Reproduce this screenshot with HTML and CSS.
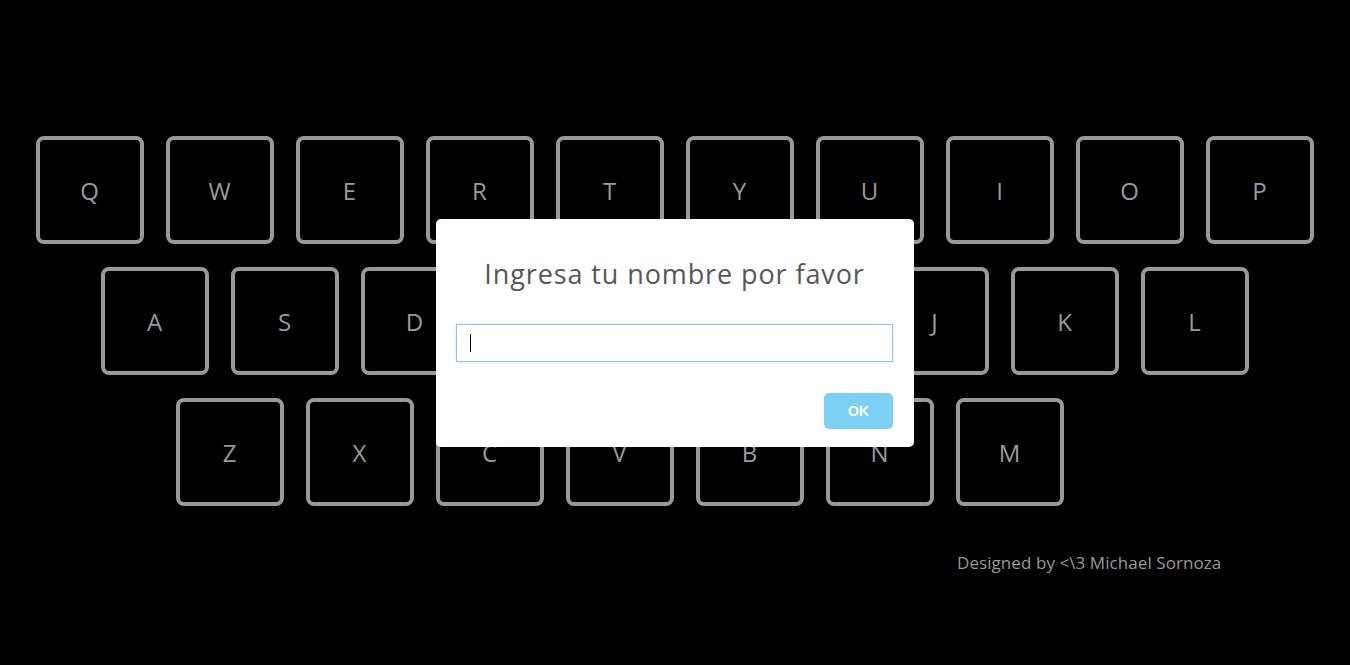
FILE: index.html
```html
<!DOCTYPE html>
<html lang="es">
<head>
<meta charset="utf-8">
<title>Keyboard</title>
<link rel="stylesheet" href="styles.css">
</head>
<body>
<main class="page">
  <div class="keyboard">
    <div class="row">
      <div class="key">Q</div><div class="key">W</div><div class="key">E</div><div class="key">R</div><div class="key">T</div><div class="key">Y</div><div class="key">U</div><div class="key">I</div><div class="key">O</div><div class="key">P</div>
    </div>
    <div class="row">
      <div class="key">A</div><div class="key">S</div><div class="key">D</div><div class="key">F</div><div class="key">G</div><div class="key">H</div><div class="key">J</div><div class="key">K</div><div class="key">L</div>
    </div>
    <div class="row row-last">
      <div class="key">Z</div><div class="key">X</div><div class="key">C</div><div class="key">V</div><div class="key">B</div><div class="key">N</div><div class="key">M</div>
    </div>
  </div>
  <footer class="credits">Designed by &lt;\3 Michael Sornoza</footer>
</main>
<div class="overlay">
  <div class="modal">
    <h2 class="modal-title">Ingresa tu nombre por favor</h2>
    <div class="modal-input"><span class="caret"></span></div>
    <div class="modal-actions">
      <button class="btn-ok">OK</button>
    </div>
  </div>
</div>
</body>
</html>
```

FILE: styles.css
```css
html, body {
  margin: 0;
  padding: 0;
  background: #000;
  height: 100%;
}
body {
  font-family: "Open Sans", "DejaVu Sans", sans-serif;
  overflow: hidden;
}
.page {
  padding-top: 136px;
}
.keyboard {
  display: flex;
  flex-direction: column;
  gap: 23px;
}
.row {
  display: flex;
  justify-content: center;
  gap: 22px;
}
.row-last {
  padding-right: 110px;
}
.key {
  width: 100px;
  height: 100px;
  border: 4px solid #999;
  border-radius: 8px;
  display: flex;
  align-items: center;
  justify-content: center;
  color: #9a9a9a;
  font-size: 24px;
  letter-spacing: 1px;
}
.credits {
  margin-top: 45px;
  padding-left: 957px;
  color: #999;
  font-size: 17px;
  line-height: 24px;
  letter-spacing: 0.07px;
}
.overlay {
  position: fixed;
  inset: 0;
  display: flex;
  align-items: center;
  justify-content: center;
}
.modal {
  width: 478px;
  box-sizing: border-box;
  background: #fff;
  border-radius: 5px;
  padding: 35px 21px 18px 20px;
}
.modal-title {
  margin: 0;
  text-align: center;
  color: #575757;
  font-size: 27px;
  font-weight: 400;
  line-height: 40px;
  letter-spacing: 0.9px;
}
.modal-input {
  margin-top: 30px;
  height: 38px;
  box-sizing: border-box;
  border: 1px solid #8ec5f2;
  box-shadow: 0 0 2px rgba(142, 197, 242, 0.6);
  display: flex;
  align-items: center;
  padding-left: 13px;
}
.caret {
  width: 1px;
  height: 18px;
  background: #000;
}
.modal-actions {
  margin-top: 31px;
  display: flex;
  justify-content: flex-end;
}
.btn-ok {
  width: 69px;
  height: 36px;
  border: 0;
  border-radius: 5px;
  background: #7ecff4;
  color: #fff;
  font-family: "Liberation Sans", Arial, sans-serif;
  font-weight: 700;
  font-size: 14px;
}
```
